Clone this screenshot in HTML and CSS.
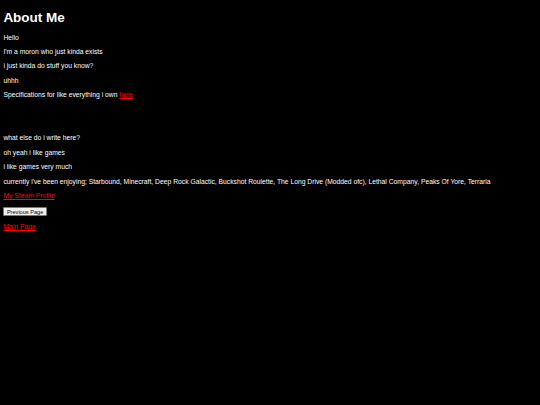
FILE: index.html
```html
<!DOCTYPE html>
<html lang="en">
<head>
<meta charset="utf-8">
<title>About Me</title>
<link rel="stylesheet" href="styles.css">
</head>
<body class="page">
<h1 class="title">About Me</h1>
<p class="para">Hello</p>
<p class="para">I'm a moron who just kinda exists</p>
<p class="para">i just kinda do stuff you know?</p>
<p class="para">uhhh</p>
<p class="para">Specifications for like everything i own <a class="link" href="#">here</a></p>
<p class="para">&nbsp;</p>
<p class="para">&nbsp;</p>
<p class="para">what else do i write here?</p>
<p class="para">oh yeah i like games</p>
<p class="para">i like games very much</p>
<p class="para">currently i've been enjoying; Starbound, Minecraft, Deep Rock Galactic, Buckshot Roulette, The Long Drive (Modded ofc), Lethal Company, Peaks Of Yore, Terraria</p>
<p class="para"><a class="link" href="#">My Steam Profile</a></p>
<p class="para para-btn"><button class="btn" type="button">Previous Page</button></p>
<p class="para"><a class="link" href="#">Main Page</a></p>
</body>
</html>
```
FILE: styles.css
```css
html {
  background: #000;
}
.page {
  margin: 3.375px;
  background: #000;
  color: #fff;
  font-family: "Liberation Sans", Arial, sans-serif;
  font-size: 6.75px;
  line-height: 7.76px;
}
.title {
  font-size: 13.5px;
  line-height: 15.5px;
  font-weight: bold;
  margin: 6.2px 0 8.6px;
}
.para {
  margin: 6.64px 0;
}
.para-btn {
  margin: 7.6px 0 5.4px;
}
.link {
  color: #ff0000;
  text-decoration: underline;
}
.btn {
  font-family: "Liberation Sans", Arial, sans-serif;
  font-size: 5.6px;
  line-height: 6.5px;
  padding: 0.3px 2.5px;
  background: #efefef;
  color: #000;
  border: 1px solid #767676;
  border-radius: 1px;
  vertical-align: top;
}
```
